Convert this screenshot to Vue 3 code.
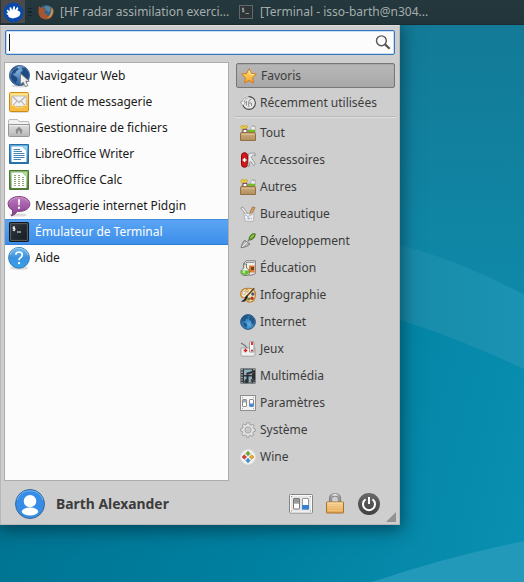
<script setup>
import { ref } from 'vue'

const icons = {
  web: `<ellipse cx="13" cy="21.8" rx="9" ry="1.6" fill="#0002"/><circle cx="12.5" cy="11.5" r="10" fill="url(#globe)" stroke="#2d5688"/><path d="M5 5.5Q7.5 2.5 11 2.5L10.3 4 12 5.2 9.5 7 8 9.5 6 9 6.5 11.5 9.5 13 10.5 16 8.5 19Q5 17 3.6 13L4.5 10ZM14.5 3L18.5 4.5 21.4 8.5 21.8 12 20 15 18 14.5 17 12 14.3 11 13.6 8.3 16 6.5Z" fill="#1d447c" opacity=".9"/><path d="M4 9Q8 1.5 17 3" stroke="#bcd8f0" opacity=".4" fill="none"/><path d="M13.5 9.5V20.4L16.2 18.2 18.3 22.7 20.8 21.6 18.8 17.3H22.3Z" fill="#eee" stroke="#7c7c7c" stroke-width=".9"/>`,
  mail: `<ellipse cx="12" cy="22" rx="10" ry="1" fill="#0002"/><rect x="2.5" y="2.5" width="19" height="19" rx="1.2" fill="url(#gold)" stroke="#cf8a17"/><path d="M4 4H20V14H4Z" fill="#ffe38d"/><rect x="4.8" y="6" width="14.4" height="10.5" fill="#f1f1f1" stroke="#b6ad96" stroke-width=".7"/><path d="M5.5 6.5L12 12.5 18.5 6.5M5.5 16L10 11M18.5 16L14 11" fill="none" stroke="#b0b0b0" stroke-width="1.1"/><path d="M3 15.5H8L9 17.5H15L16 15.5H21V21H3Z" fill="#f7bd42"/><path d="M3.5 15.5H8L9 17.5H15L16 15.5H20.5" fill="none" stroke="#ffe08a" stroke-width=".7"/>`,
  folder: `<path d="M1.5 5Q1.5 3.5 3 3.5H10.5L12 5.5H21Q22 5.5 22 7V18H1.5Z" fill="#f2f2f2" stroke="#b9b9b9"/><path d="M1.5 8.5H22.5V19.5Q22.5 20.5 21.5 20.5H2.5Q1.5 20.5 1.5 19.5Z" fill="url(#silver)" stroke="#979797"/><path d="M2.5 9.5H21.5" stroke="#eee"/><path d="M8 14.5L12 10.8 16 14.5H15V17.5H13V15H11V17.5H9V14.5Z" fill="#8d8d8d"/>`,
  writer: `<path d="M2.5 2.5H21.5V21.5H2.5Z" fill="url(#blue)" stroke="#2b6ba3"/><path d="M4.5 4.5H15L19.5 9V20H4.5Z" fill="#fff"/><path d="M15 4H20V9.5Z" fill="#9bd2f5"/><path d="M6.5 7.5H13M6.5 9.5H15M6.5 11.5H17.5M6.5 13.5H17.5M6.5 15.5H17.5M6.5 17.5H14" stroke="#4585b8"/>`,
  calc: `<path d="M2.5 2.5H21.5V21.5H2.5Z" fill="url(#green)" stroke="#4b7637"/><path d="M4.5 4.5H15L19.5 9V20H4.5Z" fill="#fff"/><path d="M15 4H20V9.5Z" fill="#b5dc9f"/><path d="M7 7.5H9M11 7.5H13M7 9.5H9M11 9.5H13M15 9.5H17M7 11.5H9M11 11.5H13M15 11.5H17M7 13.5H9M11 13.5H13M15 13.5H17M7 15.5H9M11 15.5H13M15 15.5H17M7 17.5H9M11 17.5H13M15 17.5H17" stroke="#8bad74"/>`,
  chat: `<ellipse cx="11" cy="21" rx="9" ry="1.6" fill="#0002"/><path d="M12 2.5C18 2.5 22.8 5.7 22.8 10C22.8 14.6 18 17.4 12 17.4L10.3 17.3Q8.5 20.6 4.5 22Q6 19.5 5.5 16.2Q1 13.8 1 10C1 5.7 6 2.5 12 2.5Z" fill="url(#purple)" stroke="#80427f"/><path d="M2.3 8.5Q5 3.7 12 3.6Q19 3.7 21.6 8.5" stroke="#dcacd8" fill="none" opacity=".6"/><path d="M11 5.3H13L12.6 11.3H11.4ZM11 12.8H13V14.7H11Z" fill="#fff"/>`,
  terminal: `<rect x="2.5" y="2.5" width="19" height="19" rx=".8" fill="#171d22" stroke="#161616"/><rect x="3.7" y="3.7" width="16.6" height="16.6" fill="url(#term)" stroke="#6b7276" stroke-width=".8"/><path d="M8 7.2H6V8.5H8V10.2H5.7M7 6V11.2M10 12H14" fill="none" stroke="#eee" stroke-width="1"/>`,
  help: `<ellipse cx="12" cy="22" rx="9" ry="1.7" fill="#0002"/><circle cx="12" cy="11.8" r="10.4" fill="url(#help)" stroke="#3980bc"/><path d="M3 9Q6 1.5 12 2.2Q19 2.5 21 9" stroke="#b0dcfa" fill="none" opacity=".7"/><path d="M8.7 8.7Q9 6 12 6Q15.3 6 15.3 8.8Q15.3 10.5 13.4 11.8Q12 12.7 12 14.3" fill="none" stroke="#fff" stroke-width="1.7"/><circle cx="12" cy="17.1" r="1.2" fill="#fff"/>`,
  star: `<path d="M8 .7L10.2 5.4 15.3 6.1 11.6 9.7 12.5 15 8 12.5 3.5 15 4.4 9.7 .7 6.1 5.8 5.4Z" fill="url(#gold)" stroke="#d57b1e"/><path d="M8 2.5L9.5 6.3 13.2 6.8" fill="none" stroke="#fff0a8"/>`,
  recent: `<circle cx="9" cy="8" r="6.4" fill="#e6e6e6" stroke="#484848" stroke-width="1.1"/><path d="M8.4 1.4A6.4 6.4 0 0 0 2.6 8V10" fill="none" stroke="#ddd" stroke-width="2.6"/><path d="M7.5 1.4A7 7 0 0 0 1.8 7H.4L3 10.8 5.6 7H3.9Q4.2 4 8 2.8" fill="#f4f4f4" stroke="#888" stroke-width=".7"/><path d="M11.5 4Q9 4 8.7 7V12M6.5 6V10.5M8.7 8H11.5V11" stroke="#8e8e8e" fill="none"/>`,
  box: `<path d="M1 1L3 0 4 2 6 0 7.5 1 7 3 5 4V8H2V4L1 3Z" fill="#e9cd38" stroke="#b6901e" stroke-width=".5"/><path d="M11 2L13 0V2L15.3 1V4L14 6H11Z" fill="#eee" stroke="#888" stroke-width=".5"/><path d="M3 4.3H7V7.5H3Z" fill="#fff" stroke="#6a376d"/><path d="M8 5H15V7H8Z" fill="#83cb25" stroke="#4c8914" stroke-width=".4"/><path d="M1 7.5H15L15.5 9V15.5H.5V9Z" fill="url(#wood)" stroke="#907044"/><path d="M1.5 9.5H14.5" stroke="#d9ba8c"/>`,
  knife: `<rect x="1.5" y=".7" width="6" height="14.6" rx="3" fill="#d2191b" stroke="#8a0507"/><path d="M4.5 6V10M2.5 8H6.5" stroke="#fff" stroke-width="1.5"/><path d="M8.5 2Q11 .5 15 1.2L15.3 4 13.5 3 11 5.3 13 8 15.2 12 13.8 13.7 10.7 9.3 9.5 11V14.3H8Z" fill="#e9e9e9" stroke="#8c8c8c" stroke-width=".8"/>`,
  office: `<path d="M.8 2L2.8 1 8 8 6.3 9Z" fill="#f4f4f4" stroke="#777" stroke-width=".7"/><path d="M12.5 1L15 1.5 11.5 8.5 9.3 8Z" fill="#dda052" stroke="#8d6530" stroke-width=".7"/><path d="M3.5 7L5.5 15.3H13.5L14 6.5L10 8Z" fill="#f4f4f4" stroke="#aaa" stroke-width=".8"/><path d="M4.5 8.5L8 10.5 13 8" stroke="#a3aeb5" fill="none"/><path d="M7.5 11.5H9.5V13.5H7.5Z" fill="#85b5d2"/><path d="M10.5 11.5H12V13.5H10.5Z" fill="#e0b5b5"/>`,
  trowel: `<path d="M15.3 1Q12 -.5 9.5 4.2L9 6.3 11 7Q15.5 5 15.3 1Z" fill="#6fa62a" stroke="#416e17"/><path d="M13.8 1.7L10.5 5" stroke="#b2dd6c"/><path d="M9.8 6.3L8 8" stroke="#777" stroke-width="1.5"/><path d="M1 14.8Q2.2 9.5 4.5 7.2L10 11Q7.5 14 1 14.8Z" fill="#b5b9b5" stroke="#777"/><path d="M2 14L7 9" stroke="#eee"/>`,
  education: `<path d="M4 3L6.5 .8H15.3V13.5L12 15H4Z" fill="#f0f0f0" stroke="#777"/><path d="M6 2.5H14" stroke="#999"/><path d="M9 5.5H14.5V12.5H9Z" fill="#e6792a"/><path d="M11 7H14V10H11Z" fill="#6a442a"/><path d="M3 4H7M3.8 4V8Q.5 10 .8 12.5Q1.5 15.5 5 15.5Q9.5 15.5 9.5 12Q9.5 9.3 6.5 8V4" fill="#eee" stroke="#687a62"/><path d="M1.3 10.5H9Q9.5 14.9 5 14.9Q1 14.9 1.3 10.5Z" fill="#67bd32"/><circle cx="4" cy="12" r="1.2" fill="#c3f298"/>`,
  palette: `<path d="M3 2.5Q6 .7 11 1.5Q15.8 3 15.3 8Q15 14.8 10 15Q6.5 15.3 7 12.5Q7 10.5 4.5 11Q.8 10.5.7 7Q.7 4 3 2.5Z" fill="#f7e4ba" stroke="#c17c24" stroke-width="1.2"/><g stroke-width=".4" stroke="#7a542a"><circle cx="3.8" cy="5.8" r="1.5" fill="#fff"/><circle cx="7" cy="3.6" r="1.4" fill="#f5d48a"/><circle cx="12.8" cy="7" r="1.5" fill="#2d65a5"/><circle cx="12" cy="11.3" r="1.5" fill="#cb251f"/><circle cx="8.9" cy="12" r="1.3" fill="#5b9d27"/></g><path d="M14.2 1.2L7 9" stroke="#634522" stroke-width="1.6"/><path d="M7 8L5 10 4.5 12 .7 14.7 5 14.5 8 10Z" fill="#252525"/>`,
  globe: `<circle cx="8" cy="8" r="7.4" fill="url(#sphere)" stroke="#2b5c86"/><path d="M2 4Q4.5 1 8 1.2L7 3 8.5 4 6 5 5 7.5 3 7 1.5 8ZM3 8.5L6 9 7.5 11 6 14 4 12ZM10 2L13 4 14.7 7 13.2 11 11.6 9.5 11 7 9 5.5Z" fill="#205180" opacity=".85"/>`,
  games: `<path d="M1 7H15V14Q15 15.2 13 15.2H2Q1 15.2 1 14Z" fill="#f0f0f0" stroke="#a3a3a3"/><path d="M9.5 1.5Q9.5 .7 10.5 .7H13Q14 .7 14 1.7V11H9.5Z" fill="#f7f7f7" stroke="#999"/><rect x="11" y="1" width="2" height="3" fill="#e03434"/><path d="M1 2L5 4.5 7 7" stroke="#777" fill="none" stroke-width="1.2"/><path d="M5.5 7.7V11.3M3.7 9.5H7.3" stroke="#c22" stroke-width="1.5"/><circle cx="12" cy="9.5" r="1.1" fill="#c33"/>`,
  media: `<path d="M.5 .5H15.5V15.5H.5Z" fill="#303438"/><path d="M4 1.5H12V7H4ZM4 8.5H12V14.5H4Z" fill="#8fb0c0"/><path d="M2 1V15M14 1V15" stroke="#c5cccd" stroke-width="1.4" stroke-dasharray="1.4 1.2"/><path d="M7.5 13V5.5L14 3.5V12" fill="none" stroke="#292b2d" stroke-width="2"/><circle cx="6.5" cy="13.2" r="2.1" fill="#333"/><circle cx="12.8" cy="12.5" r="2.1" fill="#444"/><path d="M7.5 6.7L14 4.7" stroke="#666"/>`,
  settings: `<rect x=".5" y=".5" width="15" height="15" fill="#f3f3f3" stroke="#8e8e8e"/><rect x="2.5" y="4.5" width="4" height="7" rx=".6" fill="#fff" stroke="#888"/><path d="M3 5H6V7.5H3Z" fill="#aaa"/><rect x="9.5" y="4.5" width="4" height="7" rx=".6" fill="#fff" stroke="#888"/><path d="M9.5 8.5H13.5V11.5H9.5Z" fill="#3c8edd"/><path d="M2 2.5H3M13 2.5H14M2 13.5H3M13 13.5H14" stroke="#aaa"/>`,
  system: `<path d="M6.7.7H9.3L9.8 2.7 11.2 3.3 13 2.2 14.2 4 13.2 5.4 13.6 6.6 15.3 7V9.2L13.4 9.7 12.8 11.2 13.8 13 12 14.2 10.6 13.2 9.3 13.5 8.9 15.3H6.8L6.2 13.4 4.9 12.9 3 13.9 1.9 12 2.8 10.6 2.4 9.3.7 8.9V6.8L2.6 6.2 3.2 4.9 2.2 3.2 3.8 2 5.2 3 6.3 2.6Z" fill="#e3e3e3" stroke="#989898" stroke-width=".9"/><circle cx="8" cy="8" r="3.1" fill="#d0d0d0" stroke="#a3a3a3"/><circle cx="8" cy="8" r="1.2" fill="#eee" stroke="#aaa" stroke-width=".7"/>`,
  wine: `<circle cx="8" cy="8" r="7.4" fill="#f2f2f2" stroke="#e0e0e0"/><g stroke-width=".5"><path d="M8 2.2L10.2 4.5 8 6.8 5.8 4.5Z" fill="#6ea931" stroke="#507c23"/><path d="M4.3 5.8L6.6 8 4.3 10.2 2 8Z" fill="#dc3b31" stroke="#a62a25"/><path d="M11.7 5.8L14 8 11.7 10.2 9.4 8Z" fill="#e9a82d" stroke="#b1791c"/><path d="M8 9.2L10.2 11.5 8 13.8 5.8 11.5Z" fill="#3e91d4" stroke="#2a6fa8"/></g>`,
}

const favourites = [
  ['web', 'Navigateur Web'],
  ['mail', 'Client de messagerie'],
  ['folder', 'Gestionnaire de fichiers'],
  ['writer', 'LibreOffice Writer'],
  ['calc', 'LibreOffice Calc'],
  ['chat', 'Messagerie internet Pidgin'],
  ['terminal', 'Émulateur de Terminal'],
  ['help', 'Aide'],
]
const categories = [
  ['box', 'Tout'],
  ['knife', 'Accessoires'],
  ['box', 'Autres'],
  ['office', 'Bureautique'],
  ['trowel', 'Développement'],
  ['education', 'Éducation'],
  ['palette', 'Infographie'],
  ['globe', 'Internet'],
  ['games', 'Jeux'],
  ['media', 'Multimédia'],
  ['settings', 'Paramètres'],
  ['system', 'Système'],
  ['wine', 'Wine'],
]
const selected = ref(6)
</script>

<template>
  <main class="desktop">
    <svg class="wallpaper" viewBox="0 0 524 582">
      <defs>
        <linearGradient id="sky" x1="0" y1="0" x2="0" y2="1"><stop offset="0" stop-color="#137995" /><stop offset=".5" stop-color="#0f88a8" /><stop offset="1" stop-color="#0c91b3" /></linearGradient>
        <linearGradient id="sea" gradientUnits="userSpaceOnUse" x1="0" y1="420" x2="524" y2="560"><stop offset="0" stop-color="#007391" /><stop offset=".5" stop-color="#007f9f" /><stop offset="1" stop-color="#0a90b2" /></linearGradient>
        <linearGradient id="band" x1="0" y1="0" x2="1" y2="0"><stop offset=".7" stop-color="#1788a6" /><stop offset="1" stop-color="#1b93b3" /></linearGradient>
        <radialGradient id="globe" cx=".4" cy=".25" r=".8"><stop offset="0" stop-color="#83b1dc" /><stop offset=".6" stop-color="#4179b5" /><stop offset="1" stop-color="#27558f" /></radialGradient>
        <radialGradient id="sphere" cx=".55" cy=".65" r=".6"><stop offset="0" stop-color="#5db0e6" /><stop offset=".6" stop-color="#3580b7" /><stop offset="1" stop-color="#2a6394" /></radialGradient>
        <linearGradient id="gold" x2="0" y2="1"><stop offset="0" stop-color="#ffe47c" /><stop offset="1" stop-color="#f6a127" /></linearGradient>
        <linearGradient id="silver" x2="0" y2="1"><stop offset="0" stop-color="#dfdfdf" /><stop offset="1" stop-color="#b7b7b7" /></linearGradient>
        <linearGradient id="blue" x2="0" y2="1"><stop offset="0" stop-color="#5fb0e2" /><stop offset="1" stop-color="#2872ad" /></linearGradient>
        <linearGradient id="green" x2="0" y2="1"><stop offset="0" stop-color="#8bb971" /><stop offset="1" stop-color="#4e7d3a" /></linearGradient>
        <linearGradient id="purple" x2="0" y2="1"><stop offset="0" stop-color="#be7abd" /><stop offset="1" stop-color="#863d91" /></linearGradient>
        <linearGradient id="term" x2="1" y2="1"><stop offset="0" stop-color="#30383e" /><stop offset="1" stop-color="#151d23" /></linearGradient>
        <linearGradient id="help" x2="0" y2="1"><stop offset="0" stop-color="#77bdf0" /><stop offset=".5" stop-color="#3992df" /><stop offset="1" stop-color="#38a0e9" /></linearGradient>
        <linearGradient id="wood" x2="0" y2="1"><stop offset="0" stop-color="#cdac7e" /><stop offset="1" stop-color="#b2905f" /></linearGradient>
        <linearGradient id="dark" x2="0" y2="1"><stop offset="0" stop-color="#686868" /><stop offset="1" stop-color="#404040" /></linearGradient>
        <linearGradient id="steel" x2="1" y2="0"><stop offset="0" stop-color="#999" /><stop offset=".5" stop-color="#eee" /><stop offset="1" stop-color="#999" /></linearGradient>
        <linearGradient id="brass" x2="0" y2="1"><stop offset="0" stop-color="#f5cf94" /><stop offset="1" stop-color="#e6a650" /></linearGradient>
      </defs>
      <rect width="524" height="582" fill="url(#sky)" />
      <path d="M0 240H380Q452 256 524 295V400H0Z" fill="url(#band)" />
      <path d="M0 300H330Q426 323 524 369V582H0Z" fill="url(#sea)" />
      <path d="M372 582Q445 557 524 541V582Z" fill="#2299b9" />
    </svg>

    <header class="panel">
      <span class="launcher">
        <svg width="21" height="21" viewBox="0 0 21 21"><circle cx="10.5" cy="10.5" r="10" fill="#0b49a8" /><path d="M3 11.6L5 11 3.6 8.4 4.6 7.6 6.8 9.3 6.6 5.6 8 5.2 9.2 8.3 10.6 4.2 12 4.6 11.8 8.2 14.2 4.9 15.4 5.9 14.4 8.5Q17.5 9 17.4 11.5Q17 14.3 13.5 15.6Q9.5 17.2 6.5 15.6Q5 14.8 5.2 13.3Z" fill="#fff" /></svg>
      </span>
      <span class="grip"><i></i><i></i><i></i></span>
      <span class="task first">
        <svg width="16" height="16" viewBox="0 0 16 16"><circle cx="8.2" cy="7.8" r="6.9" fill="#31628d" /><path d="M6 3.5Q9 1 12 3L12.8 6 11 8.5 9 7Z" fill="#51859f" /><path d="M1 2L3 4 5 2.5 5.5 5 8 5.8 6 7.5 7 9.7 10 10.4 8.5 12 10.5 12.3Q13.5 11 13.7 7L12.5 2Q16.5 5 15.5 9Q14 15.5 8 15.5Q1.5 15 .5 9Q.3 5 1 2Z" fill="#a8562f" /><path d="M13.7 3.5Q16.8 9 12.5 12.7Q11 14 8.5 14.3Q13.5 12 13.7 3.5Z" fill="#c9a050" /></svg>
        <span class="task-name">[HF radar assimilation exerci...</span>
      </span>
      <span class="task second">
        <svg width="16" height="16" viewBox="0 0 16 16"><rect x="1.5" y="1.5" width="13" height="13" fill="#2d3537" stroke="#62686a" /><path d="M6 4.5H4.3V6H6V7.5H4M5.2 3.5V8.5M7.5 9.5H11" fill="none" stroke="#9ba09e" stroke-width=".9" /></svg>
        <span class="task-name">[Terminal - isso-barth@n304...</span>
      </span>
    </header>

    <section class="menu">
      <div class="search">
        <i class="caret"></i>
        <svg width="18" height="18" viewBox="0 0 18 18" fill="none" stroke="#555"><circle cx="7.4" cy="6.8" r="4.9" stroke-width="1.4" /><path d="M11 10.4L15.7 14.7" stroke-width="2.2" /></svg>
      </div>

      <div class="content">
        <ul class="apps">
          <li v-for="([icon, name], i) in favourites" :key="name" :class="{ active: i === selected }" @click="selected = i">
            <svg width="24" height="24" viewBox="0 0 24 24" v-html="icons[icon]"></svg>
            <span>{{ name }}</span>
          </li>
        </ul>

        <nav class="categories">
          <a class="category current"><svg width="16" height="16" viewBox="0 0 16 16" v-html="icons.star"></svg><span>Favoris</span></a>
          <a class="category recent"><svg width="16" height="16" viewBox="0 0 16 16" v-html="icons.recent"></svg><span>Récemment utilisées</span></a>
          <hr />
          <a v-for="[icon, name] in categories" :key="name" class="category">
            <svg width="16" height="16" viewBox="0 0 16 16" v-html="icons[icon]"></svg><span>{{ name }}</span>
          </a>
        </nav>
      </div>

      <footer class="session">
        <svg class="avatar" width="30" height="30" viewBox="0 0 30 30"><circle cx="15" cy="15" r="14.5" fill="#378ce8" stroke="#3b6992" /><path d="M2 11Q5 2 15 1.8Q25 2 28 11" fill="none" stroke="#69b5ee" /><circle cx="15" cy="12.2" r="6.2" fill="#fff" /><ellipse cx="15" cy="22.5" rx="8.2" ry="4" fill="#fff" /></svg>
        <strong>Barth Alexander</strong>
        <svg class="prefs" width="24" height="20" viewBox="0 0 24 20"><rect x=".5" y=".5" width="23" height="18.5" rx="1" fill="#e6e6e6" stroke="#858585" /><rect x="1.5" y="1.5" width="21" height="16.5" fill="none" stroke="#fafafa" /><rect x="4.5" y="4.5" width="6" height="10.5" rx=".5" fill="#fff" stroke="#777" /><path d="M5 5H10V8.5H5Z" fill="#999" /><path d="M5 9H10" stroke="#777" /><rect x="13.5" y="4.5" width="6" height="10.5" rx=".5" fill="#fff" stroke="#999" /><path d="M13 11H20V15.5H13Z" fill="#3583d0" /><path d="M2 2.5H3M21 2.5H22M2 17H3M21 17H22" stroke="#888" /></svg>
        <svg class="lock" width="18" height="21" viewBox="0 0 18 21"><path d="M4.5 10V6Q4.5 1.8 9 1.8Q13.5 1.8 13.5 6V10" fill="none" stroke="#777" stroke-width="3.2" /><path d="M4.5 10V6Q4.5 1.8 9 1.8Q13.5 1.8 13.5 6V10" fill="none" stroke="url(#steel)" stroke-width="1.9" /><rect x=".5" y="9" width="17" height="11" rx=".5" fill="url(#brass)" stroke="#a77330" /><path d="M1.5 10H16.5" stroke="#ffdfa8" /><path d="M2 12.5H16M2 15H16M2 17.5H16" stroke="#f7d08f" stroke-width=".6" /></svg>
        <svg class="power" width="22" height="22" viewBox="0 0 22 22"><circle cx="11" cy="11" r="11" fill="url(#dark)" /><path d="M7.6 6.2A6 6 0 1 0 14.4 6.2M11 4V11" fill="none" stroke="#fff" stroke-width="2" /></svg>
        <svg class="resize" width="10" height="10" viewBox="0 0 10 10"><path d="M10 0V10H0Z" fill="#929292" /></svg>
      </footer>
    </section>
  </main>
</template>

<style>
body { margin: 0; }
</style>

<style scoped>
.desktop { position: relative; width: 524px; height: 582px; overflow: hidden; font: 12px/18px "Noto Sans", sans-serif; }
svg { display: block; flex: none; }
.wallpaper { position: absolute; inset: 0; width: 524px; height: 582px; }
.panel { position: relative; z-index: 2; display: flex; box-sizing: border-box; height: 25px; border-bottom: 1px solid #1b2b30; background: linear-gradient(#24383e, #213439); color: #a6adad; }
.launcher { width: 24px; height: 23px; margin-left: 1px; display: flex; align-items: center; justify-content: center; background: #4b494c; }
.launcher svg { margin-top: 2px; }
.grip { display: grid; gap: 2px; align-content: center; width: 4px; margin-left: 3px; }
.grip i { height: 1.5px; background: #14262b; }
.task { display: flex; height: 24px; align-items: center; white-space: nowrap; }
.task svg { margin-right: 6px; }
.first { width: 200px; margin-left: 6px; }
.menu { position: relative; display: flex; flex-direction: column; box-sizing: border-box; width: 400px; height: 500px; padding: 4px 3px 2px; border: 1px solid #b8b8b8; border-top-color: #ddd; background: #cecece; color: #3c3c3c; box-shadow: 0 3px 16px 2px #002c3ba8; }
.search { display: flex; align-items: center; justify-content: space-between; box-sizing: border-box; width: 390px; height: 25px; margin-left: 1px; padding: 0 2px 0 3px; border: 1px solid #3976bd; border-radius: 2px; background: #fcfcfc; box-shadow: inset 0 0 0 1px #c5dff5; }
.caret { width: 1px; height: 17px; background: #111; }
.content { display: flex; gap: 7px; margin-top: 7px; }
.apps { box-sizing: border-box; flex: none; width: 225px; height: 419px; margin: 0; padding: 0; border: 1px solid #adadad; background: #fcfcfc; color: #1a1a1a; list-style: none; letter-spacing: -.03px; }
.apps li { display: flex; align-items: center; gap: 4px; height: 26px; padding-left: 2px; box-sizing: border-box; white-space: nowrap; }
.apps .active { color: #fff; background: linear-gradient(#5ba5f3, #3c8eea); box-shadow: inset 0 1px #438ddd, inset 0 -1px #327ed5; }
.categories { flex: none; width: 160px; padding-top: 1px; }
.category { display: flex; box-sizing: border-box; height: 27px; align-items: center; gap: 4px; padding-left: 4px; white-space: nowrap; }
.current { width: 159px; height: 25px; border: 1px solid #777; border-radius: 2px; background: linear-gradient(#b8b8b8, #a8a8a8); box-shadow: inset 0 1px 1px #8885; }
.recent { height: 28px; padding-top: 1px; }
hr { height: 1px; margin: 0 0 1px -1px; border: 0; border-top: 1px solid #b8b8b8; background: #e0e0e0; }
.session { position: relative; display: flex; flex: 1; align-items: center; padding: 4px 0 0 11px; }
.session strong { margin-left: 11px; width: 233px; font-size: 13.9px; line-height: 20px; }
.lock { margin-left: 13px; }
.power { margin-left: 14px; }
.resize { position: absolute; right: 0; bottom: 0; }
</style>
